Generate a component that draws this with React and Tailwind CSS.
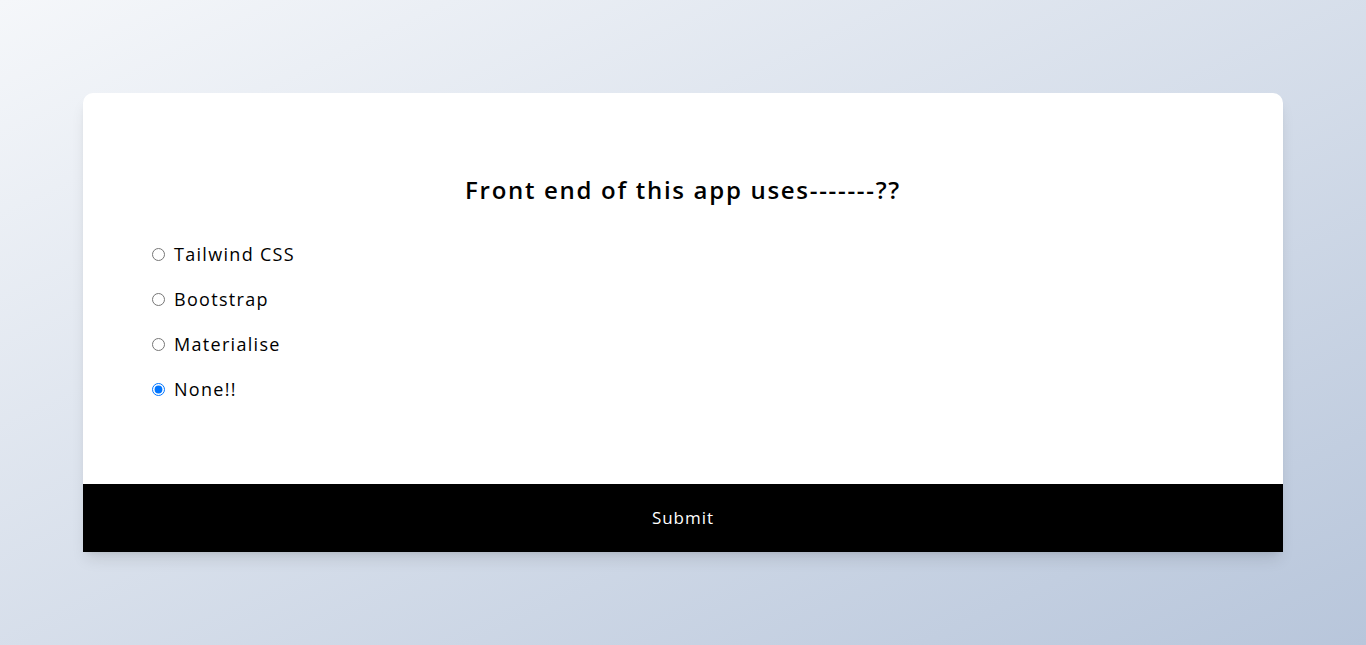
import React, { useState } from 'react';

const options = ['Tailwind CSS', 'Bootstrap', 'Materialise', 'None!!'];

export default function App() {
    const [picked, setPicked] = useState('None!!');

    return (
        <div className="min-h-screen flex items-center justify-center bg-[linear-gradient(to_bottom_right,#f5f7fa_0%,#b8c6db_100%)] font-['Open_Sans',sans-serif]">
            <div className="w-[1200px] bg-white rounded-t-[10px] shadow-lg overflow-hidden">
                {/* Pertanyaan */}
                <div className="pt-[81px] pb-[81px] px-[69px]">
                    <h2 className="text-center text-[24px] leading-8 font-semibold tracking-[1.7px] text-black">
                        Front end of this app uses-------??
                    </h2>
                    <ul className="mt-[34px] flex flex-col gap-[17px]">
                        {options.map(opt => (
                            <li key={opt} className="flex items-center h-7">
                                <label className="flex items-center gap-[9px] text-[18px] tracking-[1.3px] text-black cursor-pointer">
                                    <input
                                        type="radio"
                                        name="answer"
                                        checked={picked === opt}
                                        onChange={() => setPicked(opt)}
                                        className="w-[13px] h-[13px]"
                                    />
                                    {opt}
                                </label>
                            </li>
                        ))}
                    </ul>
                </div>

                {/* Tombol kirim */}
                <button className="w-full h-[68px] bg-black text-white text-[17px] tracking-[1px]">
                    Submit
                </button>
            </div>
        </div>
    );
}
